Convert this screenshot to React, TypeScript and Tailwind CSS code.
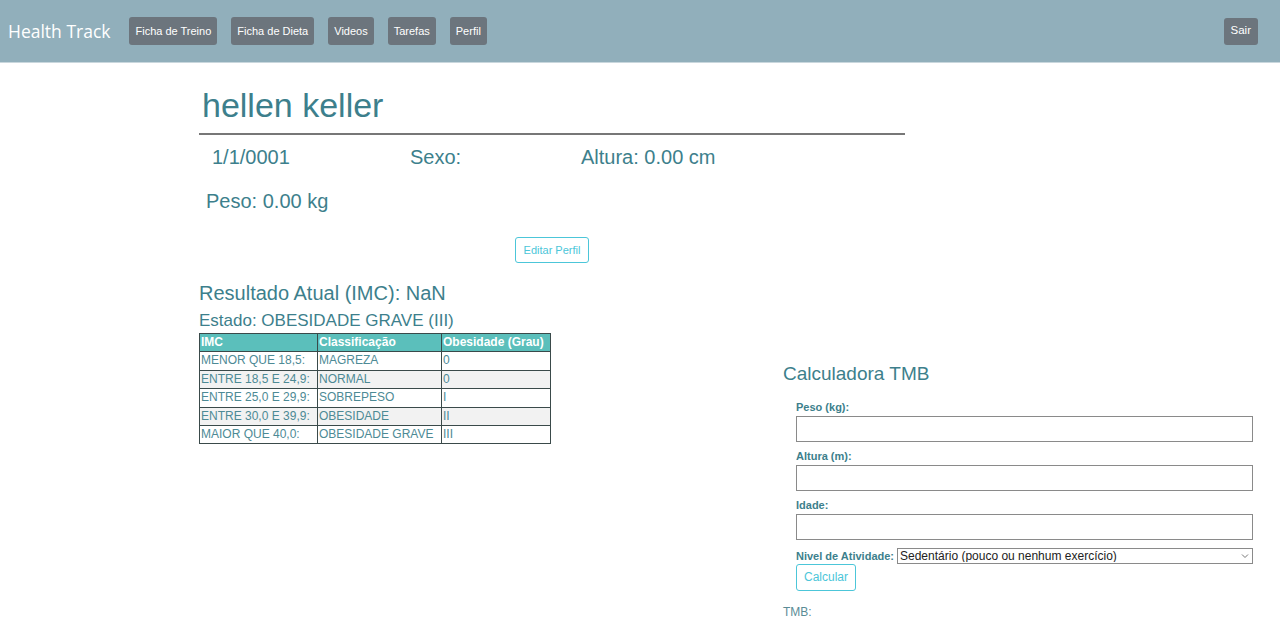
import React from 'react';

const navItems = ['Ficha de Treino', 'Ficha de Dieta', 'Videos', 'Tarefas', 'Perfil'];

const imcRows = [
  ['MENOR QUE 18,5:', 'MAGREZA', '0'],
  ['ENTRE 18,5 E 24,9:', 'NORMAL', '0'],
  ['ENTRE 25,0 E 29,9:', 'SOBREPESO', 'I'],
  ['ENTRE 30,0 E 39,9:', 'OBESIDADE', 'II'],
  ['MAIOR QUE 40,0:', 'OBESIDADE GRAVE', 'III'],
];

const Field: React.FC<{ label: string }> = ({ label }) => (
  <div className="flex flex-col">
    <label className="text-[11px] font-bold leading-[14px] mb-[2px]">{label}</label>
    <input className="h-[26px] w-full border border-[#8a8a8a] bg-white" />
  </div>
);

export default function App() {
  return (
    <div className="min-h-[632px] bg-white text-[#3d7f8c]" style={{ fontFamily: '"Liberation Sans", Arial, sans-serif' }}>
      {/* Top bar */}
      <header className="flex h-[63px] items-center border-b border-[#c9d7dd] bg-[#91afbb] pl-2 pr-[22px]">
        <div className="mr-[19px] text-[17.5px] text-white" style={{ fontFamily: '"Open Sans", sans-serif' }}>
          Health Track
        </div>
        <nav className="flex gap-[14px]">
          {navItems.map((item) => (
            <button key={item} className="h-[28px] rounded-[3px] bg-[#6c757d] px-[6px] text-[11px] text-white">
              {item}
            </button>
          ))}
        </nav>
        <button className="ml-auto h-[27px] rounded-[3px] bg-[#6c757d] px-[7px] text-[11.5px] text-white">Sair</button>
      </header>

      <main className="pl-[199px]">
        {/* Profile */}
        <section className="w-[706px]">
          <h1 className="pl-[3px] pt-[22px] text-[34px] leading-[40px]">hellen keller</h1>
          <hr className="mt-[8px] border-t-2 border-[#777]" />
          <div className="mt-[10px] flex text-[20px] leading-[24px]">
            <span className="ml-[13px] w-[198px]">1/1/0001</span>
            <span className="w-[171px]">Sexo:</span>
            <span>Altura: 0.00 cm</span>
          </div>
          <div className="mt-[20px] pl-[7px] text-[20px] leading-[24px]">Peso: 0.00 kg</div>
          <div className="mt-[24px] flex justify-center">
            <button className="h-[26px] rounded-[3px] border border-[#4cc6d9] bg-white px-[8px] text-[11px] text-[#4cc6d9]">
              Editar Perfil
            </button>
          </div>
        </section>

        <section className="flex">
          {/* IMC */}
          <div className="w-[584px]">
            <h2 className="mt-[18px] text-[20px] leading-[24px]">Resultado Atual (IMC): NaN</h2>
            <h3 className="mt-[6px] text-[17px] leading-[20px]">Estado: OBESIDADE GRAVE (III)</h3>
            <table className="mt-[2px] w-[352px] border-collapse border border-[#3a4a4a] text-[12px] leading-[17.4px]">
              <thead>
                <tr className="bg-[#5bbfbb] text-left text-white">
                  <th className="w-[118px] border border-[#3a4a4a] px-[1px] font-bold">IMC</th>
                  <th className="w-[124px] border border-[#3a4a4a] px-[1px] font-bold">Classificação</th>
                  <th className="border border-[#3a4a4a] px-[1px] font-bold">Obesidade (Grau)</th>
                </tr>
              </thead>
              <tbody className="text-[#4d8a95]">
                {imcRows.map((row, i) => (
                  <tr key={row[0]} className={i % 2 === 1 ? 'bg-[#f2f2f2]' : 'bg-white'}>
                    {row.map((cell, j) => (
                      <td key={j} className="border border-[#3a4a4a] px-[1px]">
                        {cell}
                      </td>
                    ))}
                  </tr>
                ))}
              </tbody>
            </table>
          </div>

          {/* TMB calculator */}
          <div className="mt-[99px] w-[470px]">
            <h2 className="text-[19px] leading-[24px]">Calculadora TMB</h2>
            <form className="mt-[14px] flex flex-col gap-[7px] pl-[13px]">
              <Field label="Peso (kg):" />
              <Field label="Altura (m):" />
              <Field label="Idade:" />
              <div className="mt-[1px] flex items-center gap-[3px]">
                <label className="text-[11px] font-bold">Nivel de Atividade:</label>
                <div className="relative flex-1">
                  <select className="block h-[16px] w-full appearance-none border border-[#8a8a8a] bg-white pl-[2px] text-[12px] leading-[12px] text-[#222]">
                    <option>Sedentário (pouco ou nenhum exercício)</option>
                  </select>
                  <svg className="pointer-events-none absolute right-[4px] top-[5px]" width="8" height="6" viewBox="0 0 8 6" fill="none">
                    <path d="M1 1.5L4 4.5L7 1.5" stroke="#777" strokeWidth="1" />
                  </svg>
                </div>
              </div>
              <div className="-mt-[8px]">
                <button type="button" className="h-[27px] rounded-[3px] border border-[#4cc6d9] bg-white px-[7px] text-[12px] text-[#4cc6d9]">
                  Calcular
                </button>
              </div>
            </form>
            <div className="mt-[12px] text-[12px] text-[#5a8c96]">TMB:</div>
          </div>
        </section>
      </main>
    </div>
  );
}
